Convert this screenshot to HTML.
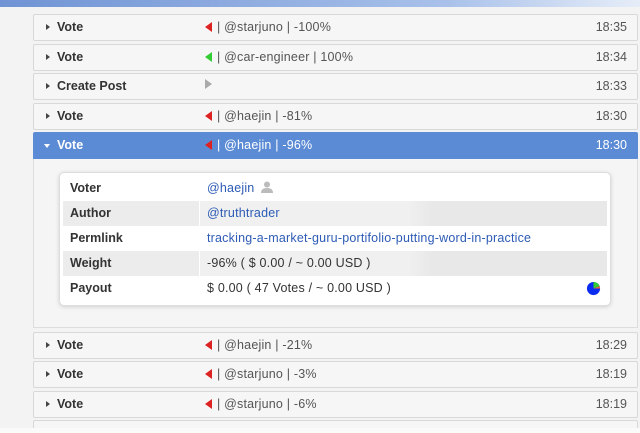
<html><head><style>
body{margin:0;width:640px;height:433px;background:#f3f3f3;font-family:"Liberation Sans",sans-serif;font-size:12.5px;color:#333;position:relative;overflow:hidden}
.top{position:absolute;left:0;top:0;width:640px;height:7px;background:linear-gradient(90deg,#6f93d4,#a9c1ea 70%,#e6edf8)}
.row{position:absolute;left:33px;width:603px;height:25px;background:#f6f6f6;border:1px solid #d8d8d8;border-radius:2px}
.row .ar{position:absolute;left:12px;top:9px;width:0;height:0;border-left:4px solid #444;border-top:3px solid transparent;border-bottom:3px solid transparent}
.row .t{position:absolute;left:23px;top:5px;font-weight:bold;color:#333;font-size:12.5px}
.row .m{position:absolute;left:171px;top:5px;color:#555;letter-spacing:.2px}
.row .tm{position:absolute;right:10px;top:5px;color:#555}
.tri{display:inline-block;width:0;height:0;border-right:7px solid #d22;border-top:5px solid transparent;border-bottom:5px solid transparent;vertical-align:-1px;margin-right:5px}
.g{border-right-color:#3c3}
.act{background:#5b8bd4;border-color:#5b8bd4}
.act .t,.act .m,.act .tm{color:#fff}
.act .ar{left:10px;top:11px;border-left:3px solid transparent;border-right:3px solid transparent;border-top:4px solid #fff;border-bottom:0}
.panel{position:absolute;left:33px;top:159px;width:603px;height:168px;background:#f5f5f5;border:1px solid #ddd;border-top:0}
.card{position:absolute;left:59px;top:172px;width:550px;height:132px;background:#fff;border:1px solid #ddd;border-radius:5px;box-shadow:0 1px 4px rgba(0,0,0,.15)}
.tr{position:absolute;left:3px;width:544px;height:25px}
.tr.s{background:linear-gradient(90deg,#ececec 0,#ececec 136px,#fff 136px,#fff 137px,#f0f0f0 137px,#f0f0f0 345px,#e8e8e8 370px)}
.tr .l{position:absolute;left:7px;top:5px;font-weight:bold}
.tr .v{position:absolute;left:144px;top:5px;letter-spacing:.2px}
a{color:#2d5bb5;text-decoration:none}
</style></head><body>
<div class="top"></div>
<div class="row" style="top:14px"><div class="ar"></div><div class="t">Vote</div><div class="m"><span class="tri"></span>| @starjuno | -100%</div><div class="tm">18:35</div></div>
<div class="row" style="top:44px"><div class="ar"></div><div class="t">Vote</div><div class="m"><span class="tri g"></span>| @car-engineer | 100%</div><div class="tm">18:34</div></div>
<div class="row" style="top:73px"><div class="ar"></div><div class="t">Create Post</div><div class="m"><span class="tri" style="border-right:0;border-left:7px solid #aaa"></span></div><div class="tm">18:33</div></div>
<div class="row" style="top:103px"><div class="ar"></div><div class="t">Vote</div><div class="m"><span class="tri"></span>| @haejin | -81%</div><div class="tm">18:30</div></div>
<div class="row act" style="top:132px;height:26px"><div class="ar"></div><div class="t">Vote</div><div class="m"><span class="tri"></span>| @haejin | -96%</div><div class="tm">18:30</div></div>
<div class="panel"></div>
<div class="card">
<div class="tr" style="top:3px"><div class="l">Voter</div><div class="v"><a>@haejin</a> <svg width="12" height="12" viewBox="0 0 12 12" style="vertical-align:-1px;margin-left:3px"><circle cx="6" cy="3.5" r="3" fill="#bbb"/><path d="M0 12 Q0 7 6 7 Q12 7 12 12Z" fill="#bbb"/></svg></div></div>
<div class="tr s" style="top:28px"><div class="l">Author</div><div class="v"><a>@truthtrader</a></div></div>
<div class="tr" style="top:53px"><div class="l">Permlink</div><div class="v"><a>tracking-a-market-guru-portifolio-putting-word-in-practice</a></div></div>
<div class="tr s" style="top:78px"><div class="l">Weight</div><div class="v">-96% ( $ 0.00 / ~ 0.00 USD )</div></div>
<div class="tr" style="top:103px"><div class="l">Payout</div><div class="v">$ 0.00 ( 47 Votes / ~ 0.00 USD )</div>
<svg width="15" height="15" viewBox="0 0 16 16" style="position:absolute;left:523px;top:5px"><circle cx="8" cy="8" r="7" fill="#0a2cf0"/><path d="M8 8V1A7 7 0 0 1 14.5 5.5Z" fill="#3c3"/><path d="M8 8L14.5 5.5A7 7 0 0 1 15 8Z" fill="#e63"/></svg></div>
</div>
<div class="row" style="top:332px"><div class="ar"></div><div class="t">Vote</div><div class="m"><span class="tri"></span>| @haejin | -21%</div><div class="tm">18:29</div></div>
<div class="row" style="top:361px"><div class="ar"></div><div class="t">Vote</div><div class="m"><span class="tri"></span>| @starjuno | -3%</div><div class="tm">18:19</div></div>
<div class="row" style="top:391px"><div class="ar"></div><div class="t">Vote</div><div class="m"><span class="tri"></span>| @starjuno | -6%</div><div class="tm">18:19</div></div>
<div class="row" style="top:420px;height:8px;border-bottom:0"></div>
<div style="position:absolute;left:0;top:428px;width:640px;height:5px;background:#fafafa"></div>
</body></html>
